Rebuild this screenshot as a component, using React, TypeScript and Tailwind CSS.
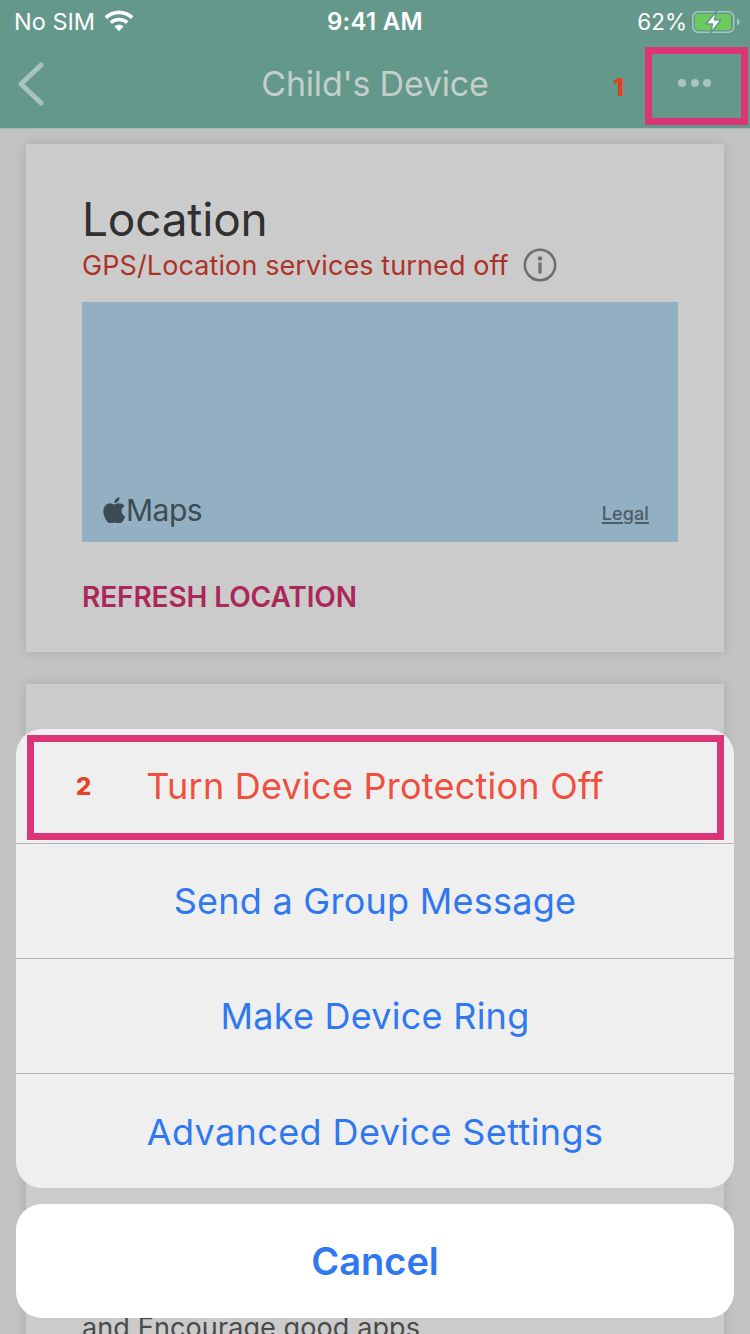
import React from 'react';

const font = { fontFamily: 'Inter, "Noto Sans", sans-serif' };

function WifiIcon() {
  return (
    <svg width="34" height="25" viewBox="0 0 30 22" fill="#fff">
      <path d="M15 4.6c4 0 7.700 1.500 10.500 4.100l2.200-2.300C24.300 3.200 19.800 1.300 15 1.300S5.700 3.200 2.300 6.400l2.200 2.300C7.300 6.100 11 4.600 15 4.600z" />
      <path d="M15 10.800c2.300 0 4.400.8 6.100 2.300l2.200-2.300c-2.300-2-5.200-3.200-8.300-3.200s-6 1.200-8.300 3.200l2.200 2.300c1.700-1.500 3.800-2.300 6.100-2.300z" />
      <path d="M15 13.900c-1.500 0-2.900.5-4 1.500l4 4.200 4-4.200c-1.100-1-2.500-1.500-4-1.500z" />
    </svg>
  );
}

function BatteryIcon() {
  return (
    <svg width="48" height="24" viewBox="0 0 48 24">
      <rect x="0.750" y="1.750" width="41" height="20.500" rx="5.500" fill="none" stroke="#a9c7bf" strokeWidth="1.500" />
      <rect x="3" y="4" width="36" height="16" rx="3" fill="#6ccb5f" />
      <path d="M45 8.500v7c1.500-.4 2.500-1.900 2.500-3.500s-1-3.100-2.500-3.500z" fill="#a9c7bf" />
      <path d="M24.500 1 14 14h6.500L18.500 23 29 10h-6.500z" fill="#fff" stroke="#63988a" strokeWidth="1.500" strokeLinejoin="round" />
    </svg>
  );
}

function InfoIcon() {
  return (
    <svg width="34" height="34" viewBox="0 0 34 34" fill="none">
      <circle cx="17" cy="17" r="15.200" stroke="#6f6f6f" strokeWidth="2.600" />
      <circle cx="17" cy="10.500" r="2.200" fill="#6f6f6f" />
      <rect x="15.400" y="14.500" width="3.200" height="11" fill="#6f6f6f" />
    </svg>
  );
}

function AppleLogo() {
  return (
    <svg width="22" height="26" viewBox="0 0 22 26" fill="#3d4b54">
      <path d="M15.200 4.200c.9-1.100 1.500-2.500 1.300-4-1.300.1-2.900.9-3.800 2-.8.9-1.600 2.400-1.400 3.800 1.500.1 2.900-.7 3.900-1.800z" />
      <path d="M16.500 6.300c-2.200-.1-4 1.200-5 1.200-1.100 0-2.700-1.200-4.400-1.200C4.800 6.400 2.700 7.700 1.500 9.700c-2.400 4.100-.6 10.200 1.700 13.500 1.100 1.600 2.500 3.400 4.300 3.400 1.700-.1 2.400-1.100 4.400-1.100s2.600 1.100 4.400 1.100c1.800 0 3-1.600 4.100-3.300 1.300-1.900 1.800-3.700 1.800-3.800-.1 0-3.600-1.400-3.600-5.400 0-3.400 2.800-5 2.900-5.100-1.600-2.300-4-2.600-4.900-2.700z" />
    </svg>
  );
}

function SheetRow({ label, danger, wide }: { label: string; danger?: boolean; wide?: boolean }) {
  return (
    <div className={`h-[115px] shrink-0 flex items-center justify-center text-[36px] border-b border-[#b5b5b5] last:border-b-0 ${wide ? 'tracking-[0.4px]' : 'tracking-[0.25px]'} ${danger ? 'text-[#ee4f3e]' : 'text-[#2f78f0]'}`}>
      {label}
    </div>
  );
}

export default function App() {
  return (
    <div className="relative w-[750px] h-[1334px] overflow-hidden bg-[#c2c2c2]" style={font}>
      {/* header */}
      <header className="h-[129px] bg-[#63988a] border-b border-[#a9b5b1] flex flex-col">
        <div className="h-[40px] flex items-center justify-between pl-[14px] pr-[10px] text-white text-[23.500px] pt-[3px]">
          <div className="flex items-center gap-[7px] w-[200px]">
            <span>No SIM</span>
            <WifiIcon />
          </div>
          <span className="font-semibold text-[24px] tracking-[0.3px]">9:41 AM</span>
          <div className="flex items-center justify-end gap-[5px] w-[204px]">
            <span className="text-[22.500px]">62%</span>
            <BatteryIcon />
          </div>
        </div>
        <div className="relative flex-1 flex items-center justify-center">
          <svg className="absolute left-[16px] top-[22px]" width="28" height="44" viewBox="0 0 28 44" fill="none">
            <path d="M25 3 5 22l20 19" stroke="#a9c4bc" strokeWidth="5" strokeLinecap="round" strokeLinejoin="round" />
          </svg>
          <span className="text-[34px] text-[#c3cfcb] tracking-[-0.2px] pb-[2px]">Child's Device</span>
          <div className="absolute left-[678px] top-[39px] flex gap-[4.500px]">
            <div className="w-[8px] h-[8px] rounded-full bg-[#a9c4bc]" />
            <div className="w-[8px] h-[8px] rounded-full bg-[#a9c4bc]" />
            <div className="w-[8px] h-[8px] rounded-full bg-[#a9c4bc]" />
          </div>
        </div>
      </header>

      {/* page behind the sheet */}
      <div className="flex flex-col gap-[32px] px-[26px] pt-[15px]">
        <section className="h-[508px] bg-[#cbcbcb] shadow-[0_0_10px_rgba(0,0,0,0.12)] pl-[56px] pr-[46px] pt-[45px]">
          <h1 className="text-[46px] leading-[60px] text-[#303030] tracking-[-0.2px]">Location</h1>
          <div className="flex items-center gap-[14px] h-[32px]">
            <span className="text-[27px] text-[#ad3226] tracking-[0.1px] mt-[2px]">GPS/Location services turned off</span>
            <InfoIcon />
          </div>
          <div className="mt-[21px] h-[240px] bg-[#92b0c2] flex items-end justify-between pl-[21px] pr-[29px] pb-[16px]">
            <div className="flex items-center gap-[1px]">
              <AppleLogo />
              <span className="text-[30px] leading-[32px] text-[#3d4b54] tracking-[-0.5px]">Maps</span>
            </div>
            <span className="text-[18px] leading-[24px] text-[#4c5d68] underline decoration-2 underline-offset-2 font-medium tracking-[0.1px]">Legal</span>
          </div>
          <div className="mt-[34px] text-[28px] font-semibold text-[#ab2659] tracking-[-0.1px]">REFRESH LOCATION</div>
        </section>
        <section className="h-[700px] bg-[#cbcbcb] shadow-[0_0_10px_rgba(0,0,0,0.12)] px-[56px] pt-[626px]">
          <p className="text-[27px] leading-[36px] text-[#4a4a4a] tracking-[0.1px]">and Encourage good apps</p>
        </section>
      </div>

      {/* action sheet */}
      <div className="absolute left-[16px] top-[729px] w-[718px] flex flex-col gap-[16px]">
        <div className="h-[459px] rounded-[26px] bg-[#efefef] overflow-hidden flex flex-col">
          <SheetRow label="Turn Device Protection Off" danger />
          <SheetRow label="Send a Group Message" />
          <SheetRow label="Make Device Ring" />
          <SheetRow label="Advanced Device Settings" wide />
        </div>
        <div className="h-[114px] rounded-[26px] bg-white flex items-center justify-center text-[38px] font-semibold text-[#2f78f0]">
          Cancel
        </div>
      </div>

      {/* annotations */}
      <div className="absolute left-[645px] top-[47px] w-[103px] h-[78px] border-[7px] border-[#db3578]" />
      <span className="absolute left-[613px] top-[72px] text-[25px] leading-[30px] font-extrabold text-[#e5401f]">1</span>
      <div className="absolute left-[27px] top-[735px] w-[697px] h-[105px] border-[7px] border-[#db3578]" />
      <span className="absolute left-[76px] top-[772px] text-[24px] leading-[30px] font-extrabold text-[#e5401f]">2</span>
    </div>
  );
}
